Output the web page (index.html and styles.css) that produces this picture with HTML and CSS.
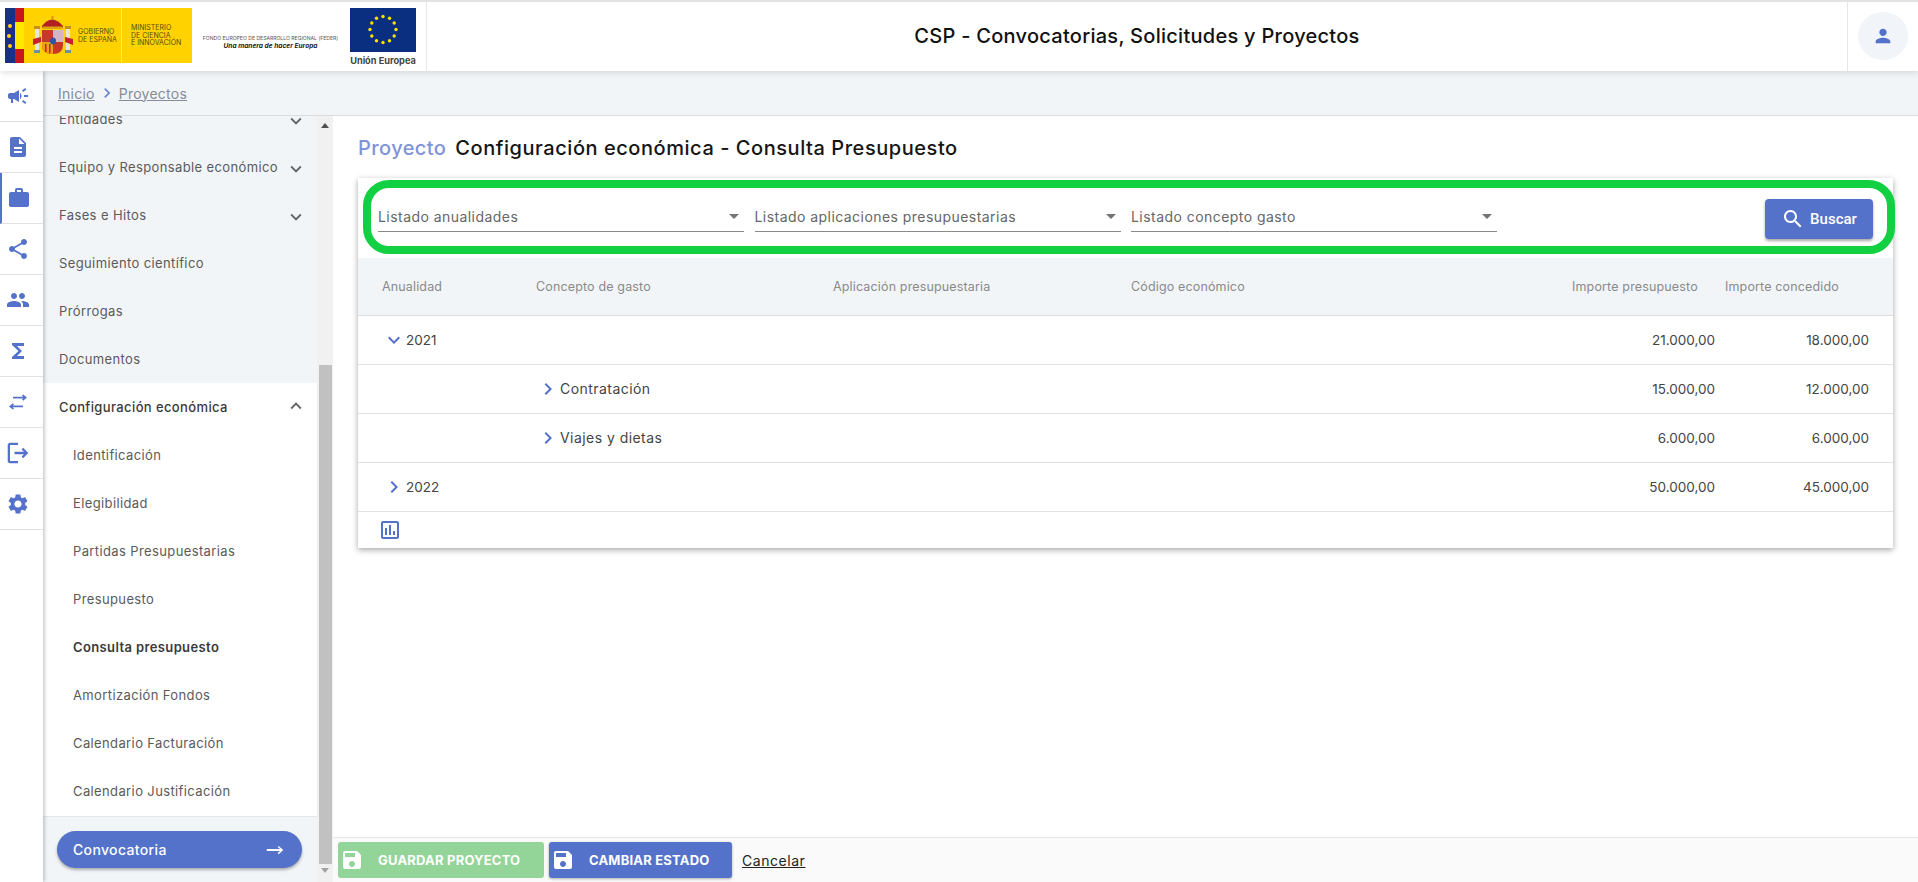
FILE: index.html
```html
<!DOCTYPE html>
<html lang="es">
<head>
<meta charset="utf-8">
<title>CSP - Convocatorias, Solicitudes y Proyectos</title>
<link rel="stylesheet" href="styles.css">
</head>
<body>
<svg class="defs" width="0" height="0" aria-hidden="true">
  <symbol id="i-campaign" viewBox="0 0 24 24"><path d="M18 11v2h4v-2h-4zm-2 6.61c.96.71 2.21 1.65 3.2 2.39.4-.53.8-1.07 1.2-1.6-.99-.74-2.24-1.68-3.2-2.4-.4.54-.8 1.08-1.2 1.61zM20.4 5.6c-.4-.53-.8-1.07-1.2-1.6-.99.74-2.24 1.68-3.2 2.4.4.53.8 1.07 1.2 1.6.96-.72 2.21-1.65 3.2-2.4zM4 9c-1.1 0-2 .9-2 2v2c0 1.1.9 2 2 2h1v4h2v-4h1l5 3V6L8 9H4zm11.5 3c0-1.33-.58-2.53-1.5-3.35v6.69c.92-.81 1.5-2.01 1.5-3.34z"/></symbol>
  <symbol id="i-doc" viewBox="0 0 24 24"><path d="M14 2H6c-1.1 0-1.99.9-1.99 2L4 20c0 1.1.89 2 1.99 2H18c1.1 0 2-.9 2-2V8l-6-6zm2 16H8v-2h8v2zm0-4H8v-2h8v2zm-3-5V3.5L18.5 9H13z"/></symbol>
  <symbol id="i-work" viewBox="0 0 24 24"><path d="M20 6h-4V4c0-1.11-.89-2-2-2h-4c-1.11 0-2 .89-2 2v2H4c-1.11 0-1.99.89-1.99 2L2 19c0 1.11.89 2 2 2h16c1.11 0 2-.89 2-2V8c0-1.11-.89-2-2-2zm-6 0h-4V4h4v2z"/></symbol>
  <symbol id="i-share" viewBox="0 0 24 24"><path d="M18 16.08c-.76 0-1.44.3-1.96.77L8.91 12.7c.05-.23.09-.46.09-.7s-.04-.47-.09-.7l7.05-4.11c.54.5 1.25.81 2.04.81 1.66 0 3-1.34 3-3s-1.34-3-3-3-3 1.34-3 3c0 .24.04.47.09.7L8.04 9.81C7.5 9.31 6.79 9 6 9c-1.66 0-3 1.34-3 3s1.34 3 3 3c.79 0 1.5-.31 2.04-.81l7.12 4.16c-.05.21-.08.43-.08.65 0 1.61 1.31 2.92 2.92 2.92 1.61 0 2.92-1.31 2.92-2.92s-1.31-2.92-2.92-2.92z"/></symbol>
  <symbol id="i-people" viewBox="0 0 24 24"><path d="M16 11c1.66 0 2.99-1.34 2.99-3S17.66 5 16 5c-1.66 0-3 1.34-3 3s1.34 3 3 3zm-8 0c1.66 0 2.99-1.34 2.99-3S9.66 5 8 5C6.34 5 5 6.34 5 8s1.34 3 3 3zm0 2c-2.33 0-7 1.17-7 3.5V19h14v-2.5c0-2.33-4.67-3.5-7-3.5zm8 0c-.29 0-.62.02-.97.05 1.16.84 1.97 1.97 1.97 3.45V19h6v-2.5c0-2.33-4.67-3.5-7-3.5z"/></symbol>
  <symbol id="i-sigma" viewBox="0 0 24 24"><path d="M18 4H6v2l6.5 6L6 18v2h12v-3h-7l5-5-5-5h7z"/></symbol>
  <symbol id="i-swap" viewBox="0 0 24 24"><path d="M8 14.400 6.900 13.200 3 16.400l3.900 3.200L8 18.400 6.700 17.300H17v-1.800H6.700zM16 9.600l1.100 1.200L21 7.600l-3.900-3.200L16 5.600l1.300 1.100H7v1.800h10.300z"/></symbol>
  <symbol id="i-exit" viewBox="1.500 1.500 21 21"><path d="M5 5h7V3H5c-1.100 0-2 .9-2 2v14c0 1.100.9 2 2 2h7v-2H5V5zm16 7-4.500-4.500-1.400 1.400 2.100 2.100H9v2h8.200l-2.100 2.100 1.400 1.400L21 12z"/></symbol>
  <symbol id="i-gear" viewBox="0 0 24 24"><path d="M19.14 12.94c.04-.3.06-.61.06-.94 0-.32-.02-.64-.07-.94l2.03-1.58c.18-.14.23-.41.12-.61l-1.92-3.32c-.12-.22-.37-.29-.59-.22l-2.39.96c-.5-.38-1.03-.7-1.62-.94l-.36-2.54c-.04-.24-.24-.41-.48-.41h-3.84c-.24 0-.43.17-.47.41l-.36 2.54c-.59.24-1.13.57-1.62.94l-2.39-.96c-.22-.08-.47 0-.59.22L2.74 8.87c-.12.21-.08.47.12.61l2.03 1.58c-.05.3-.09.63-.09.94s.02.64.07.94l-2.03 1.58c-.18.14-.23.41-.12.61l1.92 3.32c.12.22.37.29.59.22l2.39-.96c.5.38 1.03.7 1.62.94l.36 2.54c.05.24.24.41.48.41h3.84c.24 0 .44-.17.47-.41l.36-2.54c.59-.24 1.13-.56 1.62-.94l2.39.96c.22.08.47 0 .59-.22l1.92-3.32c.12-.22.07-.47-.12-.61l-2.01-1.58zM12 15.6c-1.98 0-3.6-1.62-3.6-3.6s1.62-3.6 3.6-3.6 3.6 1.62 3.6 3.6-1.62 3.6-3.6 3.6z"/></symbol>
  <symbol id="i-person" viewBox="0 0 24 24"><path d="M12 12c2.21 0 4-1.79 4-4s-1.79-4-4-4-4 1.79-4 4 1.79 4 4 4zm0 2c-2.67 0-8 1.34-8 4v2h16v-2c0-2.66-5.33-4-8-4z"/></symbol>
  <symbol id="i-search" viewBox="0 0 24 24"><path d="M15.5 14h-.79l-.28-.27C15.41 12.59 16 11.11 16 9.5 16 5.91 13.09 3 9.5 3S3 5.91 3 9.5 5.91 16 9.5 16c1.61 0 3.09-.59 4.23-1.57l.27.28v.79l5 4.99L20.49 19l-4.99-5zm-6 0C7.01 14 5 11.99 5 9.5S7.01 5 9.5 5 14 7.01 14 9.5 11.99 14 9.5 14z"/></symbol>
  <symbol id="i-save" viewBox="0 0 24 24"><path d="M17 3H5c-1.11 0-2 .9-2 2v14c0 1.1.89 2 2 2h14c1.1 0 2-.9 2-2V7l-4-4zm-5 16c-1.66 0-3-1.34-3-3s1.34-3 3-3 3 1.34 3 3-1.34 3-3 3zm3-10H5V5h10v4z"/></symbol>
  <symbol id="i-down" viewBox="0 0 24 24"><path d="M16.59 8.59 12 13.17 7.41 8.59 6 10l6 6 6-6z"/></symbol>
  <symbol id="i-up" viewBox="0 0 24 24"><path d="M12 8l-6 6 1.41 1.41L12 10.83l4.59 4.58L18 14z"/></symbol>
  <symbol id="i-right" viewBox="0 0 24 24"><path d="M10 6 8.59 7.41 13.17 12l-4.58 4.59L10 18l6-6z"/></symbol>
  <symbol id="i-chart" viewBox="0 0 24 24"><path d="M19 3H5c-1.1 0-2 .9-2 2v14c0 1.1.9 2 2 2h14c1.1 0 2-.9 2-2V5c0-1.1-.9-2-2-2zm0 16H5V5h14v14zM7 10h2v7H7zm4-3h2v10h-2zm4 6h2v4h-2z"/></symbol>
  <symbol id="i-east" viewBox="0 0 24 24"><path d="M16 7.5 14.9 8.6 17.5 11H3v2h14.500l-2.600 2.400L16 16.500 21 12z"/></symbol>
</svg>

<div class="app">
  <header class="topbar">
    <div class="logos">
      <div class="gov">
        <div class="flag">
          <span class="flag-blue"><svg class="stars-col" viewBox="0 0 10 55"><g fill="#ffd500"><circle cx="5" cy="18" r="2"/><circle cx="4" cy="28" r="2"/><circle cx="5" cy="38" r="2"/></g></svg></span>
          <span class="flag-red"></span>
        </div>
        <div class="gov-main">
          <svg class="shield" viewBox="0 0 40 40">
            <path d="M9 10q10-13 21 0l-1 3H10z" fill="#b32024"/>
            <rect x="18.500" y="0" width="2" height="3" fill="#d99a10"/>
            <rect x="10" y="10.500" width="19" height="2.500" fill="#dba711"/>
            <rect x="2" y="12" width="4" height="22" fill="#e7e4da"/>
            <rect x="33" y="12" width="4" height="22" fill="#e7e4da"/>
            <rect x="1" y="10" width="6" height="3" fill="#c98f1a"/>
            <rect x="32" y="10" width="6" height="3" fill="#c98f1a"/>
            <rect x="1" y="34" width="6" height="3" fill="#6a8fa8"/>
            <rect x="32" y="34" width="6" height="3" fill="#6a8fa8"/>
            <path d="M0 23 8 21v5l-8 3zM40 23l-8-2v5l8 3z" fill="#c8202c"/>
            <path d="M9 14h21v15q0 9-10.500 9T9 29z" fill="#c8372a"/>
            <rect x="20" y="14" width="10" height="12" fill="#d3b5c6"/>
            <path d="M9 26h11v12Q9 38 9 29z" fill="#e8a314"/>
            <rect x="12" y="28" width="1.500" height="8" fill="#c8202c"/>
            <rect x="16" y="28" width="1.500" height="9" fill="#c8202c"/>
            <ellipse cx="20" cy="25" rx="3" ry="3.500" fill="#2d55a0"/>
          </svg>
          <span class="gov-text">GOBIERNO<br>DE ESPAÑA</span>
        </div>
        <div class="gov-ministry">MINISTERIO<br>DE CIENCIA<br>E INNOVACIÓN</div>
      </div>
      <div class="feder">
        <span class="feder-top">FONDO EUROPEO DE DESARROLLO REGIONAL (FEDER)</span>
        <span class="feder-motto">Una manera de hacer Europa</span>
      </div>
      <div class="eu">
        <svg class="eu-flag" viewBox="0 0 66 44">
          <rect width="66" height="44" fill="#0b2f80"/>
          <g fill="#ffe000">
            <circle cx="33" cy="8.500" r="1.700"/><circle cx="39.500" cy="10.300" r="1.700"/><circle cx="44.200" cy="15" r="1.700"/><circle cx="46" cy="21.500" r="1.700"/><circle cx="44.200" cy="28" r="1.700"/><circle cx="39.500" cy="32.700" r="1.700"/><circle cx="33" cy="34.500" r="1.700"/><circle cx="26.500" cy="32.700" r="1.700"/><circle cx="21.800" cy="28" r="1.700"/><circle cx="20" cy="21.500" r="1.700"/><circle cx="21.800" cy="15" r="1.700"/><circle cx="26.500" cy="10.300" r="1.700"/>
          </g>
        </svg>
        <span class="eu-text">Unión Europea</span>
      </div>
    </div>
    <h1 class="app-title">CSP - Convocatorias, Solicitudes y Proyectos</h1>
    <div class="user">
      <span class="avatar"><svg class="icon-avatar"><use href="#i-person"/></svg></span>
    </div>
  </header>

  <div class="body">
    <nav class="rail">
      <a class="rail-item"><svg class="rail-icon"><use href="#i-campaign"/></svg></a>
      <a class="rail-item"><svg class="rail-icon"><use href="#i-doc"/></svg></a>
      <a class="rail-item is-current"><svg class="rail-icon"><use href="#i-work"/></svg></a>
      <a class="rail-item"><svg class="rail-icon"><use href="#i-share"/></svg></a>
      <a class="rail-item"><svg class="rail-icon"><use href="#i-people"/></svg></a>
      <a class="rail-item"><svg class="rail-icon"><use href="#i-sigma"/></svg></a>
      <a class="rail-item"><svg class="rail-icon"><use href="#i-swap"/></svg></a>
      <a class="rail-item"><svg class="rail-icon"><use href="#i-exit"/></svg></a>
      <a class="rail-item"><svg class="rail-icon"><use href="#i-gear"/></svg></a>
    </nav>

    <div class="workspace">
      <div class="breadcrumb">
        <a class="crumb">Inicio</a>
        <svg class="crumb-sep"><use href="#i-right"/></svg>
        <a class="crumb">Proyectos</a>
      </div>

      <div class="panes">
        <aside class="sidebar">
          <div class="menu-wrap">
            <ul class="menu">
              <li class="menu-row">Entidades<svg class="chev"><use href="#i-down"/></svg></li>
              <li class="menu-row">Equipo y Responsable económico<svg class="chev"><use href="#i-down"/></svg></li>
              <li class="menu-row">Fases e Hitos<svg class="chev"><use href="#i-down"/></svg></li>
              <li class="menu-row">Seguimiento científico</li>
              <li class="menu-row">Prórrogas</li>
              <li class="menu-row">Documentos</li>
              <li class="menu-row is-open">Configuración económica<svg class="chev"><use href="#i-up"/></svg></li>
              <li class="menu-row is-sub">Identificación</li>
              <li class="menu-row is-sub">Elegibilidad</li>
              <li class="menu-row is-sub">Partidas Presupuestarias</li>
              <li class="menu-row is-sub">Presupuesto</li>
              <li class="menu-row is-sub is-active">Consulta presupuesto</li>
              <li class="menu-row is-sub">Amortización Fondos</li>
              <li class="menu-row is-sub">Calendario Facturación</li>
              <li class="menu-row is-sub">Calendario Justificación</li>
            </ul>
            <div class="menu-foot">
              <a class="conv-btn">Convocatoria<svg class="conv-arrow"><use href="#i-east"/></svg></a>
            </div>
          </div>
          <div class="scrollbar">
            <span class="arrow-up"></span>
            <span class="thumb"></span>
            <span class="arrow-down"></span>
          </div>
        </aside>

        <main class="main">
          <div class="content">
            <h2 class="page-title"><span class="page-kicker">Proyecto</span>Configuración económica - Consulta Presupuesto</h2>
            <section class="card">
              <div class="filters">
                <div class="field"><span>Listado anualidades</span><i class="caret"></i></div>
                <div class="field"><span>Listado aplicaciones presupuestarias</span><i class="caret"></i></div>
                <div class="field"><span>Listado concepto gasto</span><i class="caret"></i></div>
                <button class="search-btn" type="button"><svg class="search-icon"><use href="#i-search"/></svg>Buscar</button>
              </div>
              <table class="grid">
                <colgroup>
                  <col class="c-year"><col class="c-concept"><col class="c-app"><col class="c-code"><col class="c-budget"><col class="c-granted">
                </colgroup>
                <thead>
                  <tr>
                    <th>Anualidad</th><th>Concepto de gasto</th><th>Aplicación presupuestaria</th><th>Código económico</th><th>Importe presupuesto</th><th>Importe concedido</th>
                  </tr>
                </thead>
                <tbody>
                  <tr>
                    <td class="tree-first"><span class="tree"><svg class="tree-chev"><use href="#i-down"/></svg>2021</span></td><td></td><td></td><td></td><td class="num">21.000,00</td><td class="num last">18.000,00</td>
                  </tr>
                  <tr>
                    <td></td><td><span class="tree is-concept"><svg class="tree-chev"><use href="#i-right"/></svg>Contratación</span></td><td></td><td></td><td class="num">15.000,00</td><td class="num last">12.000,00</td>
                  </tr>
                  <tr>
                    <td></td><td><span class="tree is-concept"><svg class="tree-chev"><use href="#i-right"/></svg>Viajes y dietas</span></td><td></td><td></td><td class="num">6.000,00</td><td class="num last">6.000,00</td>
                  </tr>
                  <tr>
                    <td class="tree-first"><span class="tree"><svg class="tree-chev"><use href="#i-right"/></svg>2022</span></td><td></td><td></td><td></td><td class="num">50.000,00</td><td class="num last">45.000,00</td>
                  </tr>
                </tbody>
              </table>
              <div class="card-foot"><svg class="chart-icon"><use href="#i-chart"/></svg></div>
            </section>
          </div>
          <footer class="actions">
            <button class="action is-disabled" type="button"><svg class="action-icon"><use href="#i-save"/></svg>GUARDAR PROYECTO</button>
            <button class="action" type="button"><svg class="action-icon"><use href="#i-save"/></svg>CAMBIAR ESTADO</button>
            <a class="cancel">Cancelar</a>
          </footer>
        </main>
      </div>
    </div>
  </div>
</div>
</body>
</html>
```

FILE: styles.css
```css
* { box-sizing: border-box; }
html, body { margin: 0; height: 100%; overflow: hidden; }
body { font-family: Inter, "Open Sans", "Liberation Sans", sans-serif; color: #333; background: #fff; }
.defs { display: block; height: 0; }
ul { list-style: none; margin: 0; padding: 0; }
h1, h2 { margin: 0; }

.app { height: 882px; display: flex; flex-direction: column; }

/* Top bar */
.topbar { height: 71px; flex: none; display: flex; border-top: 2px solid #e2e2e2; background: #fff; box-shadow: 0 2px 6px rgba(0,0,0,.12); position: relative; z-index: 3; }
.logos { width: 427px; flex: none; display: flex; border-right: 1px solid #e6e6e6; padding: 6px 0 0 5px; }
.gov { width: 187px; height: 55px; display: flex; background: #ffd200; }
.flag { width: 19px; display: flex; flex: none; }
.flag-blue { width: 10px; background: #1b2f87; display: block; }
.stars-col { width: 10px; height: 55px; display: block; }
.flag-red { width: 9px; background: linear-gradient(#c8161d 0 14px, #ffe800 14px 41px, #c8161d 41px); }
.gov-main { width: 98px; flex: none; display: flex; align-items: center; gap: 5px; padding-left: 9px; border-right: 1px solid #ffe680; }
.shield { width: 40px; height: 40px; flex: none; }
.gov-text, .gov-ministry { font-size: 7px; line-height: 7.500px; color: #5a4a12; }
.gov-ministry { align-self: center; padding-left: 9px; }
.feder { width: 157px; display: flex; flex-direction: column; align-items: center; padding-top: 26px; flex: none; }
.feder-top { font-size: 5.100px; line-height: 8px; color: #555; white-space: nowrap; }
.feder-motto { font-size: 6.600px; line-height: 9px; font-style: italic; font-weight: 700; color: #222; white-space: nowrap; }
.eu { width: 66px; margin-left: 1px; display: flex; flex-direction: column; align-items: center; }
.eu-flag { width: 66px; height: 44px; display: block; flex: none; }
.eu-text { font-size: 9.200px; line-height: 18px; font-weight: 700; color: #444; white-space: nowrap; }
.app-title { flex: 1; text-align: center; font-size: 20px; line-height: 68px; font-weight: 500; color: #111; letter-spacing: .27px; }
.user { width: 71px; flex: none; border-left: 1px solid #e6e6e6; display: flex; align-items: center; padding-left: 10px; padding-bottom: 2px; }
.avatar { width: 50px; height: 48px; border-radius: 50%; background: #f1f4f8; display: flex; align-items: center; justify-content: center; }
.icon-avatar { width: 22px; height: 22px; fill: #5472ca; }

.body { flex: 1; display: flex; min-height: 0; }

/* Icon rail */
.rail { width: 43px; flex: none; background: #fff; box-shadow: 1px 0 4px rgba(0,0,0,.28); position: relative; z-index: 2; }
.rail-item { height: 51px; display: flex; align-items: center; justify-content: center; padding-right: 7px; border-bottom: 1px solid #e2e2e2; border-left: 0 solid transparent; }
.rail-item.is-current { border-left: 2px solid #5472ca; padding-right: 7px; }
.rail-icon { width: 24px; height: 24px; fill: #5472ca; }

.workspace { flex: 1; min-width: 0; display: flex; flex-direction: column; }

/* Breadcrumb */
.breadcrumb { height: 45px; flex: none; display: flex; align-items: center; padding-left: 15px; background: #f2f5f8; border-bottom: 1px solid #dcdcdc; font-size: 14px; }
.crumb { color: #858b97; text-decoration: underline; letter-spacing: .25px; }
.crumb-sep { width: 20px; height: 20px; fill: #6d85d2; margin: 0 2px; }

.panes { flex: 1; display: flex; min-height: 0; }

/* Sidebar */
.sidebar { width: 290px; flex: none; display: flex; }
.menu-wrap { width: 274px; flex: none; display: flex; flex-direction: column; background: #fff; overflow: hidden; }
.menu { flex: 1; min-height: 0; margin-top: -21px; }
.menu-row { height: 48px; display: flex; align-items: center; justify-content: space-between; padding: 0 14px 0 16px; background: #f2f5f8; font-size: 13px; color: #5a5a5a; letter-spacing: .38px; }
.menu-row.is-open { background: #fff; font-weight: 500; color: #3a3a3a; }
.menu-row.is-sub { background: #fff; padding-left: 30px; font-size: 13px; }
.menu-row.is-active { font-weight: 600; color: #3a3a3a; }
.chev { width: 22px; height: 22px; fill: #666; flex: none; margin-top: 3px; margin-right: -4px; }
.is-open .chev { margin-top: -2px; }
.menu-foot { height: 66px; flex: none; padding: 14px 15px 0 14px; background: #f2f5f8; border-top: 1px solid #e4e8ee; }
.conv-btn { height: 37px; display: flex; align-items: center; justify-content: space-between; padding: 0 16px; border-radius: 19px; background: #5472ca; color: #fff; font-size: 14px; font-weight: 500; letter-spacing: .35px; box-shadow: 0 2px 3px rgba(0,0,0,.3); }
.conv-arrow { width: 22px; height: 22px; fill: #fff; }

.scrollbar { width: 16px; flex: none; display: flex; flex-direction: column; align-items: center; background: #f1f1f1; }
.arrow-up { width: 0; height: 0; margin-top: 7px; border: 4px solid transparent; border-top: 0; border-bottom: 5px solid #505050; }
.thumb { width: 13px; height: 499px; margin-top: 237px; background: #c1c1c1; }
.arrow-down { width: 0; height: 0; margin-top: 4px; border: 4px solid transparent; border-bottom: 0; border-top: 5px solid #a3a3a3; }

/* Main */
.main { flex: 1; min-width: 0; display: flex; flex-direction: column; background: #fff; }
.content { flex: 1; min-height: 0; padding: 20px 25px 0; }
.page-title { font-size: 20px; line-height: 24px; font-weight: 500; color: #151515; margin-bottom: 18px; letter-spacing: .55px; }
.page-kicker { color: #7f93d8; margin-right: 9px; letter-spacing: .42px; }

.card { background: #fff; box-shadow: 0 2px 6px rgba(0,0,0,.35); padding-top: 2px; }
.filters { height: 74px; margin: 0 -2px 0 5px; display: flex; align-items: center; padding: 0 14px 0 7px; gap: 10.500px; border: 8px solid #11d143; border-radius: 26px; }
.field { width: 366px; height: 26px; margin-top: 3px; flex: none; display: flex; align-items: center; justify-content: space-between; border-bottom: 1px solid #8a8a8a; font-size: 14px; color: #666; padding: 0 5px 4px 0; letter-spacing: .45px; }
.caret { width: 0; height: 0; border: 5px solid transparent; border-bottom: 0; border-top: 5px solid #757575; }
.search-btn { width: 108px; height: 40px; margin-left: auto; margin-top: 4px; border: 0; border-radius: 4px; background: #5472ca; color: #fff; display: flex; align-items: center; justify-content: center; gap: 5px; font-family: Roboto, sans-serif; font-size: 15px; font-weight: 500; box-shadow: 0 2px 3px rgba(0,0,0,.35); }
.search-icon { width: 24px; height: 24px; fill: #fff; }

.grid { width: 100%; margin-top: 4px; border-collapse: collapse; table-layout: fixed; }
.c-year { width: 178px; }
.c-concept { width: 297px; }
.c-app { width: 298px; }
.c-code { width: 429px; }
.c-budget { width: 165px; }
.grid th { height: 57px; padding: 0; background: #f2f5f8; font-size: 12.500px; font-weight: 400; color: #8a8a8a; text-align: left; border-bottom: 1px solid #dcdcdc; letter-spacing: .15px; }
.grid th:first-child { padding-left: 24px; }
.grid th:nth-child(5) { padding-left: 12px; }
.grid td { height: 49px; padding: 0; font-size: 13.500px; color: #444; border-bottom: 1px solid #e2e2e2; }
.grid td.tree-first { padding-left: 24px; }
.grid td.num { text-align: right; padding-right: 10px; }
.grid td.last { padding-right: 24px; }
.tree { display: flex; align-items: center; }
.tree.is-concept { font-size: 14px; letter-spacing: .45px; }
.tree-chev { width: 24px; height: 24px; fill: #5472ca; flex: none; }
.card-foot { height: 36px; padding: 6px 0 0 20px; }
.chart-icon { width: 24px; height: 24px; fill: #5472ca; display: block; }

/* Bottom actions */
.actions { height: 45px; flex: none; display: flex; align-items: center; gap: 5px; padding: 0 5px; border-top: 1px solid #e6e6e6; background: #fafafa; }
.action { height: 36px; border: 0; border-radius: 3px; background: #5472ca; color: #fff; display: flex; align-items: center; gap: 14px; padding: 0 0 0 2px; font-family: inherit; font-size: 13px; font-weight: 700; letter-spacing: .2px; width: 183px; box-shadow: 0 1px 3px rgba(0,0,0,.3); }
.action.is-disabled { width: 206px; background: #93d499; box-shadow: none; }
.action-icon { width: 24px; height: 24px; fill: #fff; flex: none; }
.cancel { margin-left: 5px; color: #222; font-size: 14px; letter-spacing: .55px; text-decoration: underline; }
```
